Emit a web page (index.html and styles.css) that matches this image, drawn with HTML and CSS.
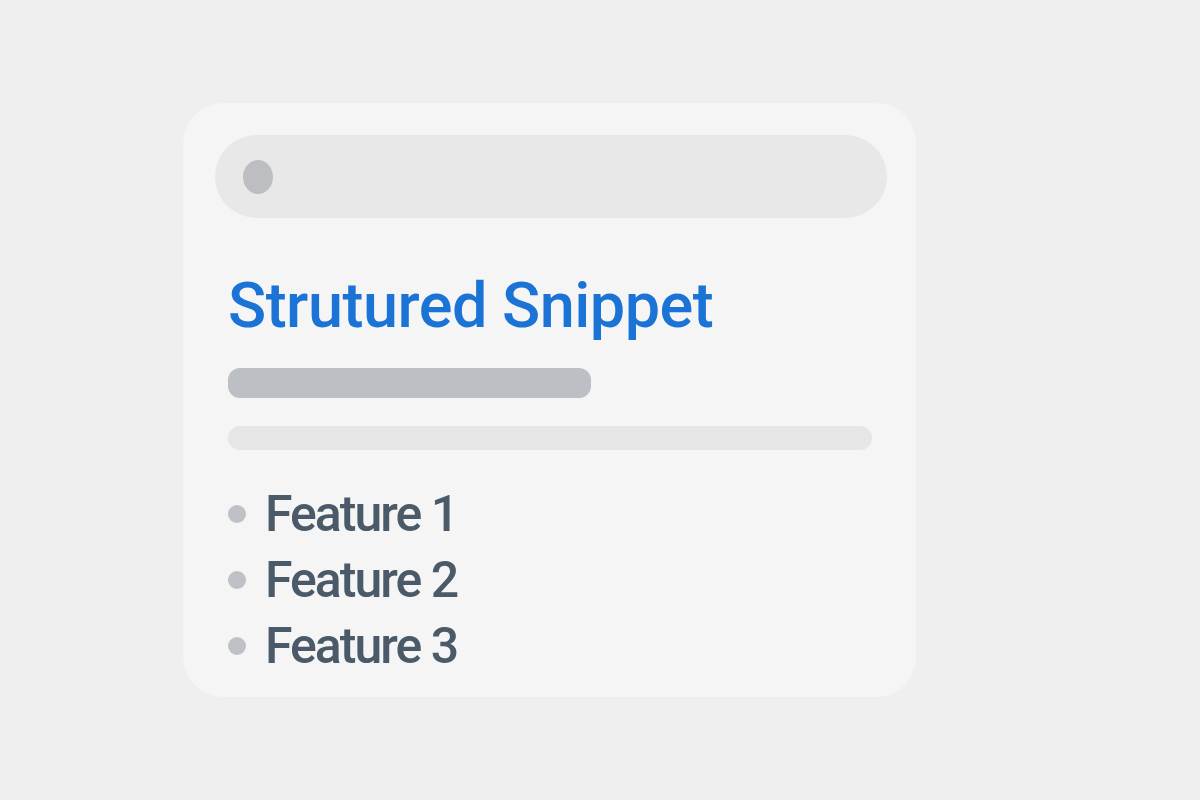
FILE: index.html
```html
<!DOCTYPE html>
<html lang="en">
<head>
    <meta charset="UTF-8">
    <meta name="viewport" content="width=device-width, initial-scale=1.0">
    <title>Structured Snippet</title>
    <link rel="stylesheet" href="styles.css">
</head>
<body>
    <div class="card">
        <div class="search-bar">
            <span class="search-dot"></span>
        </div>

        <div class="snippet">
            <h1 class="snippet-title">Strutured Snippet</h1>
            <div class="bar bar-dark"></div>
            <div class="bar bar-light"></div>

            <ul class="features">
                <li>Feature 1</li>
                <li>Feature 2</li>
                <li>Feature 3</li>
            </ul>
        </div>
    </div>
</body>
</html>
```

FILE: styles.css
```css
html, body {
    height: 100%;
}
body {
    margin: 0;
    padding: 103px 0 0 183px;
    box-sizing: border-box;
    background: #efefef;
    font-family: Roboto, "Noto Sans", sans-serif;
}
.card {
    width: 733px;
    height: 594px;
    box-sizing: border-box;
    padding: 32px 29px 0 32px;
    background: #f5f5f5;
    border-radius: 40px;
}
.search-bar {
    height: 83px;
    display: flex;
    align-items: center;
    padding-left: 28px;
    background: #e8e8e8;
    border-radius: 42px;
}
.search-dot {
    width: 30px;
    height: 34px;
    border-radius: 50%;
    background: #bcbec2;
}
.snippet {
    padding: 0 15px 0 13px;
}
.snippet-title {
    margin: 56px 0 0 0;
    font-size: 63px;
    font-weight: 500;
    letter-spacing: -0.5px;
    line-height: 1;
    color: #1a73d5;
}
.bar {
    border-radius: 12px;
}
.bar-dark {
    width: 363px;
    height: 30px;
    margin-top: 31px;
    background: #bcbfc3;
}
.bar-light {
    height: 24px;
    margin-top: 28px;
    background: #e6e6e6;
}
.features {
    list-style: none;
    margin: 31px 0 0 0;
    padding: 0;
}
.features li {
    display: flex;
    align-items: center;
    gap: 19px;
    font-size: 50px;
    font-weight: 500;
    letter-spacing: -2px;
    line-height: 66px;
    color: #4a5a68;
}
.features li::before {
    content: "";
    width: 18px;
    height: 18px;
    border-radius: 50%;
    background: #bec1c5;
}
```
